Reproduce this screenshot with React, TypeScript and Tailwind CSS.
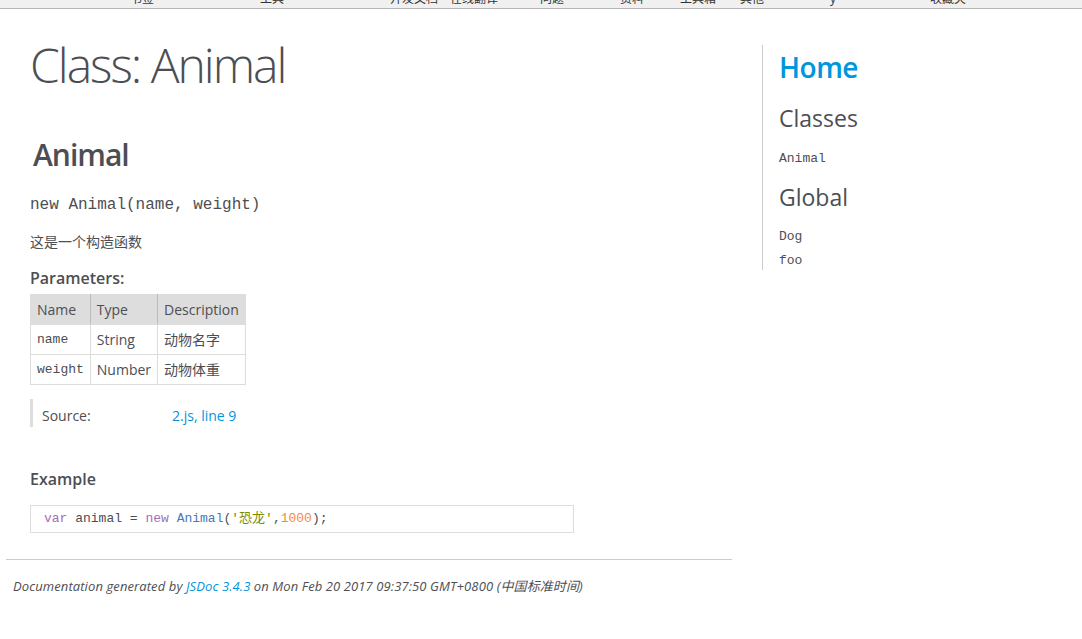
import React from "react";

const sans = { fontFamily: '"Open Sans", "Noto Sans CJK SC", sans-serif' };
const mono = { fontFamily: '"Liberation Mono", "Noto Sans CJK SC", monospace' };

const params = [
  { name: "name", type: "String", desc: "动物名字" },
  { name: "weight", type: "Number", desc: "动物体重" },
];

const topbar = [
  { w: 130, label: "书签" },
  { w: 130, label: "工具" },
  { w: 60, label: "开发文档" },
  { w: 90, label: "在线翻译" },
  { w: 80, label: "问题" },
  { w: 60, label: "资料" },
  { w: 60, label: "工具箱" },
  { w: 90, label: "其他" },
  { w: 100, label: "y" },
  { w: 140, label: "收藏夹" },
];

export default function App() {
  return (
    <div className="min-h-screen bg-white text-[#4d4e53]" style={sans}>
      {/* cut-off bookmark bar */}
      <div className="flex h-[9px] overflow-hidden border-b border-[#b5b5b5] bg-[#f0f0f0]">
        {topbar.map((t, i) => (
          <div
            key={i}
            className="-mt-[8px] shrink-0 text-[12px] leading-[14px] text-[#333]"
            style={{ marginLeft: i === 0 ? 130 : 0, width: t.w }}
          >
            {t.label}
          </div>
        ))}
      </div>

      <div className="flex">
        <div className="w-[732px] shrink-0 pl-[30px]">
          <h1 className="mt-[30px] text-[48px] font-light leading-[52px] tracking-[-2px]">
            Class: Animal
          </h1>

          <h2 className="mt-[47px] pl-[3px] text-[30px] font-semibold leading-[33px] tracking-[-1px]">
            Animal
          </h2>

          <div className="mt-[26px] text-[16px] leading-[16px]" style={mono}>
            new Animal(name, weight)
          </div>

          <p className="mt-[19px] text-[14px] leading-[20px]">这是一个构造函数</p>

          <h5 className="mt-[16px] text-[16px] font-semibold leading-[20px]">Parameters:</h5>

          <table className="mt-[6px] border-collapse text-[14px]">
            <thead>
              <tr className="bg-[#dddddd]">
                <th className="h-[30px] border border-[#dddddd] border-r-[#bbbbbb] px-[6px] text-left font-normal">
                  Name
                </th>
                <th className="h-[30px] border border-[#dddddd] border-r-[#bbbbbb] px-[6px] text-left font-normal">
                  Type
                </th>
                <th className="h-[30px] border border-[#dddddd] px-[6px] text-left font-normal">
                  Description
                </th>
              </tr>
            </thead>
            <tbody>
              {params.map((p) => (
                <tr key={p.name}>
                  <td className="h-[30px] border border-[#dddddd] px-[6px] text-[13px]" style={mono}>
                    {p.name}
                  </td>
                  <td className="h-[30px] border border-[#dddddd] px-[6px]">{p.type}</td>
                  <td className="h-[30px] border border-[#dddddd] px-[6px]">{p.desc}</td>
                </tr>
              ))}
            </tbody>
          </table>

          <div className="mt-[14px] flex h-[28px] border-l-[3px] border-[#dddddd] pl-[9px] pt-[7px] text-[14px] leading-[20px]">
            <span className="w-[130px]">Source:</span>
            <span className="text-[#0095dd]">2.js, line 9</span>
          </div>

          <h5 className="mt-[42px] text-[16px] font-semibold leading-[20px]">Example</h5>

          <div
            className="mt-[16px] h-[28px] w-[544px] border border-[#dddddd] pl-[13px] text-[13px] leading-[26px]"
            style={mono}
          >
            <span className="text-[#a26eb6]">var</span> animal ={" "}
            <span className="text-[#a26eb6]">new</span>{" "}
            <span className="text-[#4a78b8]">Animal</span>(
            <span className="text-[#7f8a00]">'恐龙'</span>,
            <span className="text-[#f28b3c]">1000</span>);
          </div>
        </div>

        <nav className="ml-[30px] mt-[36px] h-[225px] border-l border-[#cccccc] pl-[16px]">
          <h2 className="mt-[5px] text-[28px] font-semibold leading-[34px] tracking-[-0.5px] text-[#0095dd]">
            Home
          </h2>
          <h3 className="mt-[19px] text-[23px] leading-[30px]">Classes</h3>
          <ul className="mt-[14px] text-[13px] leading-[24px]" style={mono}>
            <li>Animal</li>
          </ul>
          <h3 className="mt-[11px] text-[23px] leading-[30px]">Global</h3>
          <ul className="mt-[13px] text-[13px] leading-[24px]" style={mono}>
            <li>Dog</li>
            <li>foo</li>
          </ul>
        </nav>
      </div>

      <footer className="ml-[6px] mt-[26px] w-[726px] border-t border-[#cccccc] pl-[7px] pt-[16px] text-[13px] italic leading-[20px] tracking-[0.1px]">
        Documentation generated by <span className="text-[#0095dd]">JSDoc 3.4.3</span> on Mon Feb 20 2017
        09:37:50 GMT+0800 (中国标准时间)
      </footer>
    </div>
  );
}
